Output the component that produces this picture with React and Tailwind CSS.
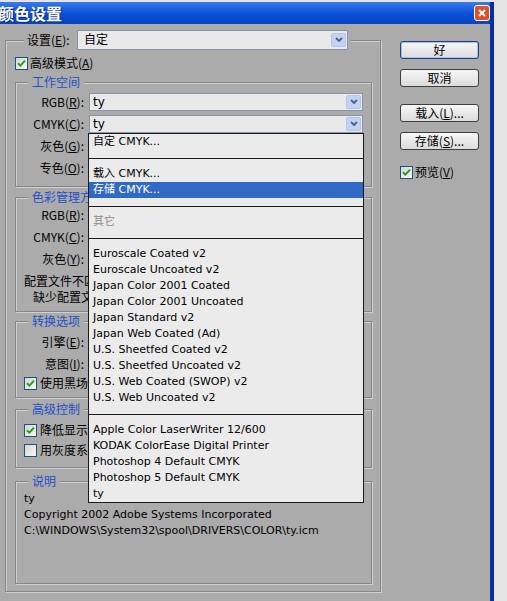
const latin = "font-['DejaVu_Sans','Noto_Sans_CJK_SC',sans-serif]";

const Check = ({ checked }) => (
  <span className="flex h-[13px] w-[13px] shrink-0 items-center justify-center border border-[#1c5180] bg-linear-to-br from-[#d6d6d0] to-[#f8f8f8]">
    {checked && (
      <svg width="9" height="9" viewBox="0 0 9 9">
        <path d="M1 4.2 L3.4 6.6 L8 1.6" fill="none" stroke="#21a121" strokeWidth="2" />
      </svg>
    )}
  </span>
);

const Select = ({ value, className }) => (
  <div className={`flex h-[18px] items-center border border-[#8797ab] bg-[#e9e9e9] pl-[3px] ${className}`}>
    <span className={`flex-1 text-[12px] leading-none ${latin}`}>{value}</span>
    <span className="mr-px flex h-[14px] w-[15px] items-center justify-center rounded-[2px] border border-[#b3c5ea] bg-[#c3d3f6]">
      <svg width="8" height="6" viewBox="0 0 8 6">
        <path d="M1 1 L4 4 L7 1" stroke="#4d6185" strokeWidth="1.8" fill="none" />
      </svg>
    </span>
  </div>
);

const Group = ({ title, className = "", children }) => (
  <fieldset className={`border border-[#858585] pr-[8px] shadow-[inset_1px_1px_0_#d0d0d0,1px_1px_0_#d0d0d0] ${className}`}>
    <legend className="ml-[12px] bg-[#ababab] px-[4px] text-[12px] leading-[14px] text-[#2450c8]">{title}</legend>
    {children}
  </fieldset>
);

const Row = ({ label, value }) => (
  <div className="flex h-[22px] items-center">
    <span className="w-[68px] text-right">{label}</span>
    <Select value={value} className="ml-[5px] w-[274px]" />
  </div>
);

// 被下拉列表遮住的文字在 x=88 处截断
const Clip = ({ children, className = "" }) => (
  <div className={`flex h-[16px] w-[72px] items-center overflow-hidden whitespace-nowrap ${className}`}>{children}</div>
);

const Button = ({ children, primary }) => (
  <button
    className={`flex h-[18px] w-[79px] items-center justify-center rounded-[3px] border bg-linear-to-b from-[#f7f7f7] to-[#dcdcdc] text-[12px] leading-none ${
      primary ? "border-[#1e3f8a] shadow-[inset_0_0_0_1px_#a9c0ee]" : "border-[#3e3e3e]"
    }`}
  >
    {children}
  </button>
);

const items = [
  { t: "自定 CMYK..." },
  { sep: true },
  { t: "载入 CMYK..." },
  { t: "存储 CMYK...", sel: true },
  { sep: true },
  { t: "其它", dim: true },
  { sep: true },
  { t: "Euroscale Coated v2" },
  { t: "Euroscale Uncoated v2" },
  { t: "Japan Color 2001 Coated" },
  { t: "Japan Color 2001 Uncoated" },
  { t: "Japan Standard v2" },
  { t: "Japan Web Coated (Ad)" },
  { t: "U.S. Sheetfed Coated v2" },
  { t: "U.S. Sheetfed Uncoated v2" },
  { t: "U.S. Web Coated (SWOP) v2" },
  { t: "U.S. Web Uncoated v2" },
  { sep: true },
  { t: "Apple Color LaserWriter 12/600" },
  { t: "KODAK ColorEase Digital Printer" },
  { t: "Photoshop 4 Default CMYK" },
  { t: "Photoshop 5 Default CMYK" },
  { t: "ty" },
];

export default function App() {
  return (
    <div className="relative h-[601px] w-[507px] overflow-hidden bg-[#e4e4e4] font-['Noto_Sans_CJK_SC',sans-serif] text-[12px] text-black">
      <div className="mt-[2px] flex h-[599px] w-[494px] flex-col border-r-[4px] border-[#0a2e9e]">
        {/* 标题栏 */}
        <div className="flex h-[22px] shrink-0 items-center bg-linear-to-b from-[#3a7bec] via-[#0b50d8] to-[#0845c2]">
          <span className="-ml-[2px] flex-1 text-[16px] leading-none font-bold text-white [text-shadow:1px_1px_0_#0a2a80]">颜色设置</span>
          <span className="flex h-[16px] w-[16px] items-center justify-center rounded-[3px] border border-white bg-[#d9542c]">
            <svg width="8" height="8" viewBox="0 0 8 8">
              <path d="M1 1 L7 7 M7 1 L1 7" stroke="white" strokeWidth="1.8" />
            </svg>
          </span>
        </div>

        {/* 主体 */}
        <div className="flex flex-1 items-start bg-[#ababab]">
          <fieldset className="mt-[6px] ml-[5px] w-[376px] border border-[#858585] pt-[5px] pr-[8px] pb-[7px] pl-[9px] shadow-[inset_1px_1px_0_#d0d0d0,1px_1px_0_#d0d0d0]">
            <legend className="ml-[9px] bg-[#ababab] pr-[3px] pl-[3px]">
              <div className="flex h-[20px] items-center">
                <span className="w-[50px] whitespace-nowrap">
                  设置(<u>E</u>):
                </span>
                <Select value="自定" className="h-[20px] w-[271px] pl-[6px]" />
              </div>
            </legend>

            <div className="flex h-[16px] items-center gap-[2px]">
              <Check checked />
              <span>
                高级模式(<u>A</u>)
              </span>
            </div>

            <Group title="工作空间" className="mt-[4px] pt-[2px] pb-[7px]">
              <Row label={<>RGB(<u>R</u>):</>} value="ty" />
              <Row label={<>CMYK(<u>C</u>):</>} value="ty" />
              <Row label={<>灰色(<u>G</u>):</>} value="" />
              <Row label={<>专色(<u>O</u>):</>} value="" />
            </Group>

            <Group title="色彩管理方案" className="mt-[3px] pb-[6px]">
              <Row label={<>RGB(<u>R</u>):</>} value="" />
              <Row label={<>CMYK(<u>C</u>):</>} value="" />
              <Row label={<>灰色(<u>Y</u>):</>} value="" />
              <Clip className="mt-[3px] pl-[8px]">配置文件不匹配:</Clip>
              <Clip className="pl-[17px]">缺少配置文件:</Clip>
            </Group>

            <Group title="转换选项" className="mt-[2px] pt-[3px] pb-[6px]">
              <Row label={<>引擎(<u>E</u>):</>} value="" />
              <Row label={<>意图(<u>I</u>):</>} value="" />
              <Clip className="gap-[3px] pl-[8px]">
                <Check checked />
                <span>使用黑场补偿</span>
              </Clip>
            </Group>

            <Group title="高级控制" className="mt-[4px] pt-[6px] pb-[9px]">
              <Clip className="gap-[3px] pl-[8px]">
                <Check checked />
                <span>降低显示器色彩饱和度</span>
              </Clip>
              <Clip className="mt-[4px] gap-[3px] pl-[8px]">
                <Check />
                <span>用灰度系数混合</span>
              </Clip>
            </Group>

            <Group title="说明" className="mt-[6px] pt-[3px] pb-[44px]">
              <div className={`pl-[8px] text-[11px] leading-[16px] ${latin}`}>
                <div>ty</div>
                <div>Copyright 2002 Adobe Systems Incorporated</div>
                <div>{"C:\\WINDOWS\\System32\\spool\\DRIVERS\\COLOR\\ty.icm"}</div>
              </div>
            </Group>
          </fieldset>

          {/* 右侧按钮 */}
          <div className="mt-[17px] ml-[19px] flex w-[79px] flex-col">
            <Button primary>好</Button>
            <div className="mt-[10px]">
              <Button>取消</Button>
            </div>
            <div className="mt-[17px]">
              <Button>
                载入(<u>L</u>)...
              </Button>
            </div>
            <div className="mt-[10px]">
              <Button>
                存储(<u>S</u>)...
              </Button>
            </div>
            <div className="mt-[14px] flex h-[16px] items-center gap-[2px]">
              <Check checked />
              <span>
                预览(<u>V</u>)
              </span>
            </div>
          </div>
        </div>
      </div>

      {/* CMYK 下拉列表 */}
      <div className={`absolute top-[133px] left-[88px] w-[276px] border border-[#1a1a1a] bg-[#ebebeb] text-[11px] ${latin}`}>
        {items.map((it, i) =>
          it.sep ? (
            <div key={i} className="h-[16px] pt-[8px]">
              <div className="h-px bg-[#1a1a1a]" />
            </div>
          ) : (
            <div
              key={i}
              className={`flex h-[16px] items-center pl-[4px] whitespace-nowrap ${
                it.sel ? "bg-[#316ac5] text-white" : it.dim ? "text-[#8a8a8a]" : ""
              }`}
            >
              {it.t}
            </div>
          )
        )}
      </div>
    </div>
  );
}
